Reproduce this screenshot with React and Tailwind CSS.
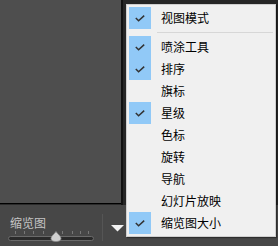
import React from 'react';

const items = [
    { label: '喷涂工具', checked: true },
    { label: '排序', checked: true },
    { label: '旗标', checked: false },
    { label: '星级', checked: true },
    { label: '色标', checked: false },
    { label: '旋转', checked: false },
    { label: '导航', checked: false },
    { label: '幻灯片放映', checked: false },
    { label: '缩览图大小', checked: true },
];

const Check = () => (
    <svg width="10" height="7" viewBox="0 0 10 7" className="block">
        <polyline points="0.8,3 3.6,5.8 9.2,0.6" fill="none" stroke="#333" strokeWidth="1.5" />
    </svg>
);

const MenuRow = ({ label, checked }) => (
    <div className="flex items-center h-[22px]">
        <div className={`w-[22px] h-[22px] flex items-center justify-center ${checked ? 'bg-[#91c9f7]' : ''}`}>
            {checked && <Check />}
        </div>
        <span className="ml-[10px] text-[12px] leading-none text-black">{label}</span>
    </div>
);

const ticks = [15, 24, 33, 43, 62, 72, 80, 88];

export default function App() {
    return (
        <div
            className="relative w-[278px] h-[246px] overflow-hidden bg-[#2b2b2b] flex flex-col"
            style={{ fontFamily: '"Noto Sans CJK SC", "Noto Sans", sans-serif' }}
        >
            {/* grid area */}
            <div className="flex h-[205px]">
                <div className="w-[121px] h-[204px] bg-[#4e4e4e] border-b border-black" />
                <div className="w-[2px] h-[205px] bg-[#111]" />
                <div className="flex-1 bg-[#262626]" />
            </div>

            {/* toolbar */}
            <div className="flex-1 flex bg-[#474747]">
                <div className="w-[102px] flex flex-col">
                    <span className="ml-[10px] mt-[10px] text-[12px] leading-[16px] text-[#c4c4c4]">缩览图</span>
                    <div className="relative ml-[8px] w-[86px] h-[11px]">
                        {ticks.map((x) => (
                            <div key={x} className="absolute top-0 w-px h-[3px] bg-[#777]" style={{ left: x - 8 }} />
                        ))}
                        <div className="absolute left-0 right-0 top-[5px] h-[5px] rounded-full bg-[#2a2a2a] border border-[#6a6a6a]" />
                        <svg width="12" height="11" viewBox="0 0 12 11" className="absolute left-[42px] top-0">
                            <path d="M6 0.5 C7.5 3 11 5 11 7.5 C11 9.5 9 10.5 6 10.5 C3 10.5 1 9.5 1 7.5 C1 5 4.5 3 6 0.5 Z" fill="#cfcfcf" stroke="#8a8a8a" strokeWidth="0.8" />
                        </svg>
                    </div>
                </div>
                <div className="mt-[9px] mb-[5px] w-px bg-[#333] border-r border-[#555]" />
                <div className="ml-[8px] mt-[20px]">
                    <svg width="13" height="7" viewBox="0 0 13 7" className="block">
                        <polygon points="0,0 13,0 6.5,6.5" fill="#f2f2f2" />
                    </svg>
                </div>
            </div>

            {/* context menu */}
            <div className="absolute left-[126px] top-[4px] w-[150px] h-[233px] bg-[#f0f0f0] border border-[#cfcfcf] p-[2px] shadow-[1px_1px_1px_rgba(0,0,0,0.35)]">
                <MenuRow label="视图模式" checked />
                <div className="my-[3px] ml-[28px] mr-[0px] h-px bg-[#d7d7d7]" />
                {items.map((it) => (
                    <MenuRow key={it.label} {...it} />
                ))}
            </div>
        </div>
    );
}
